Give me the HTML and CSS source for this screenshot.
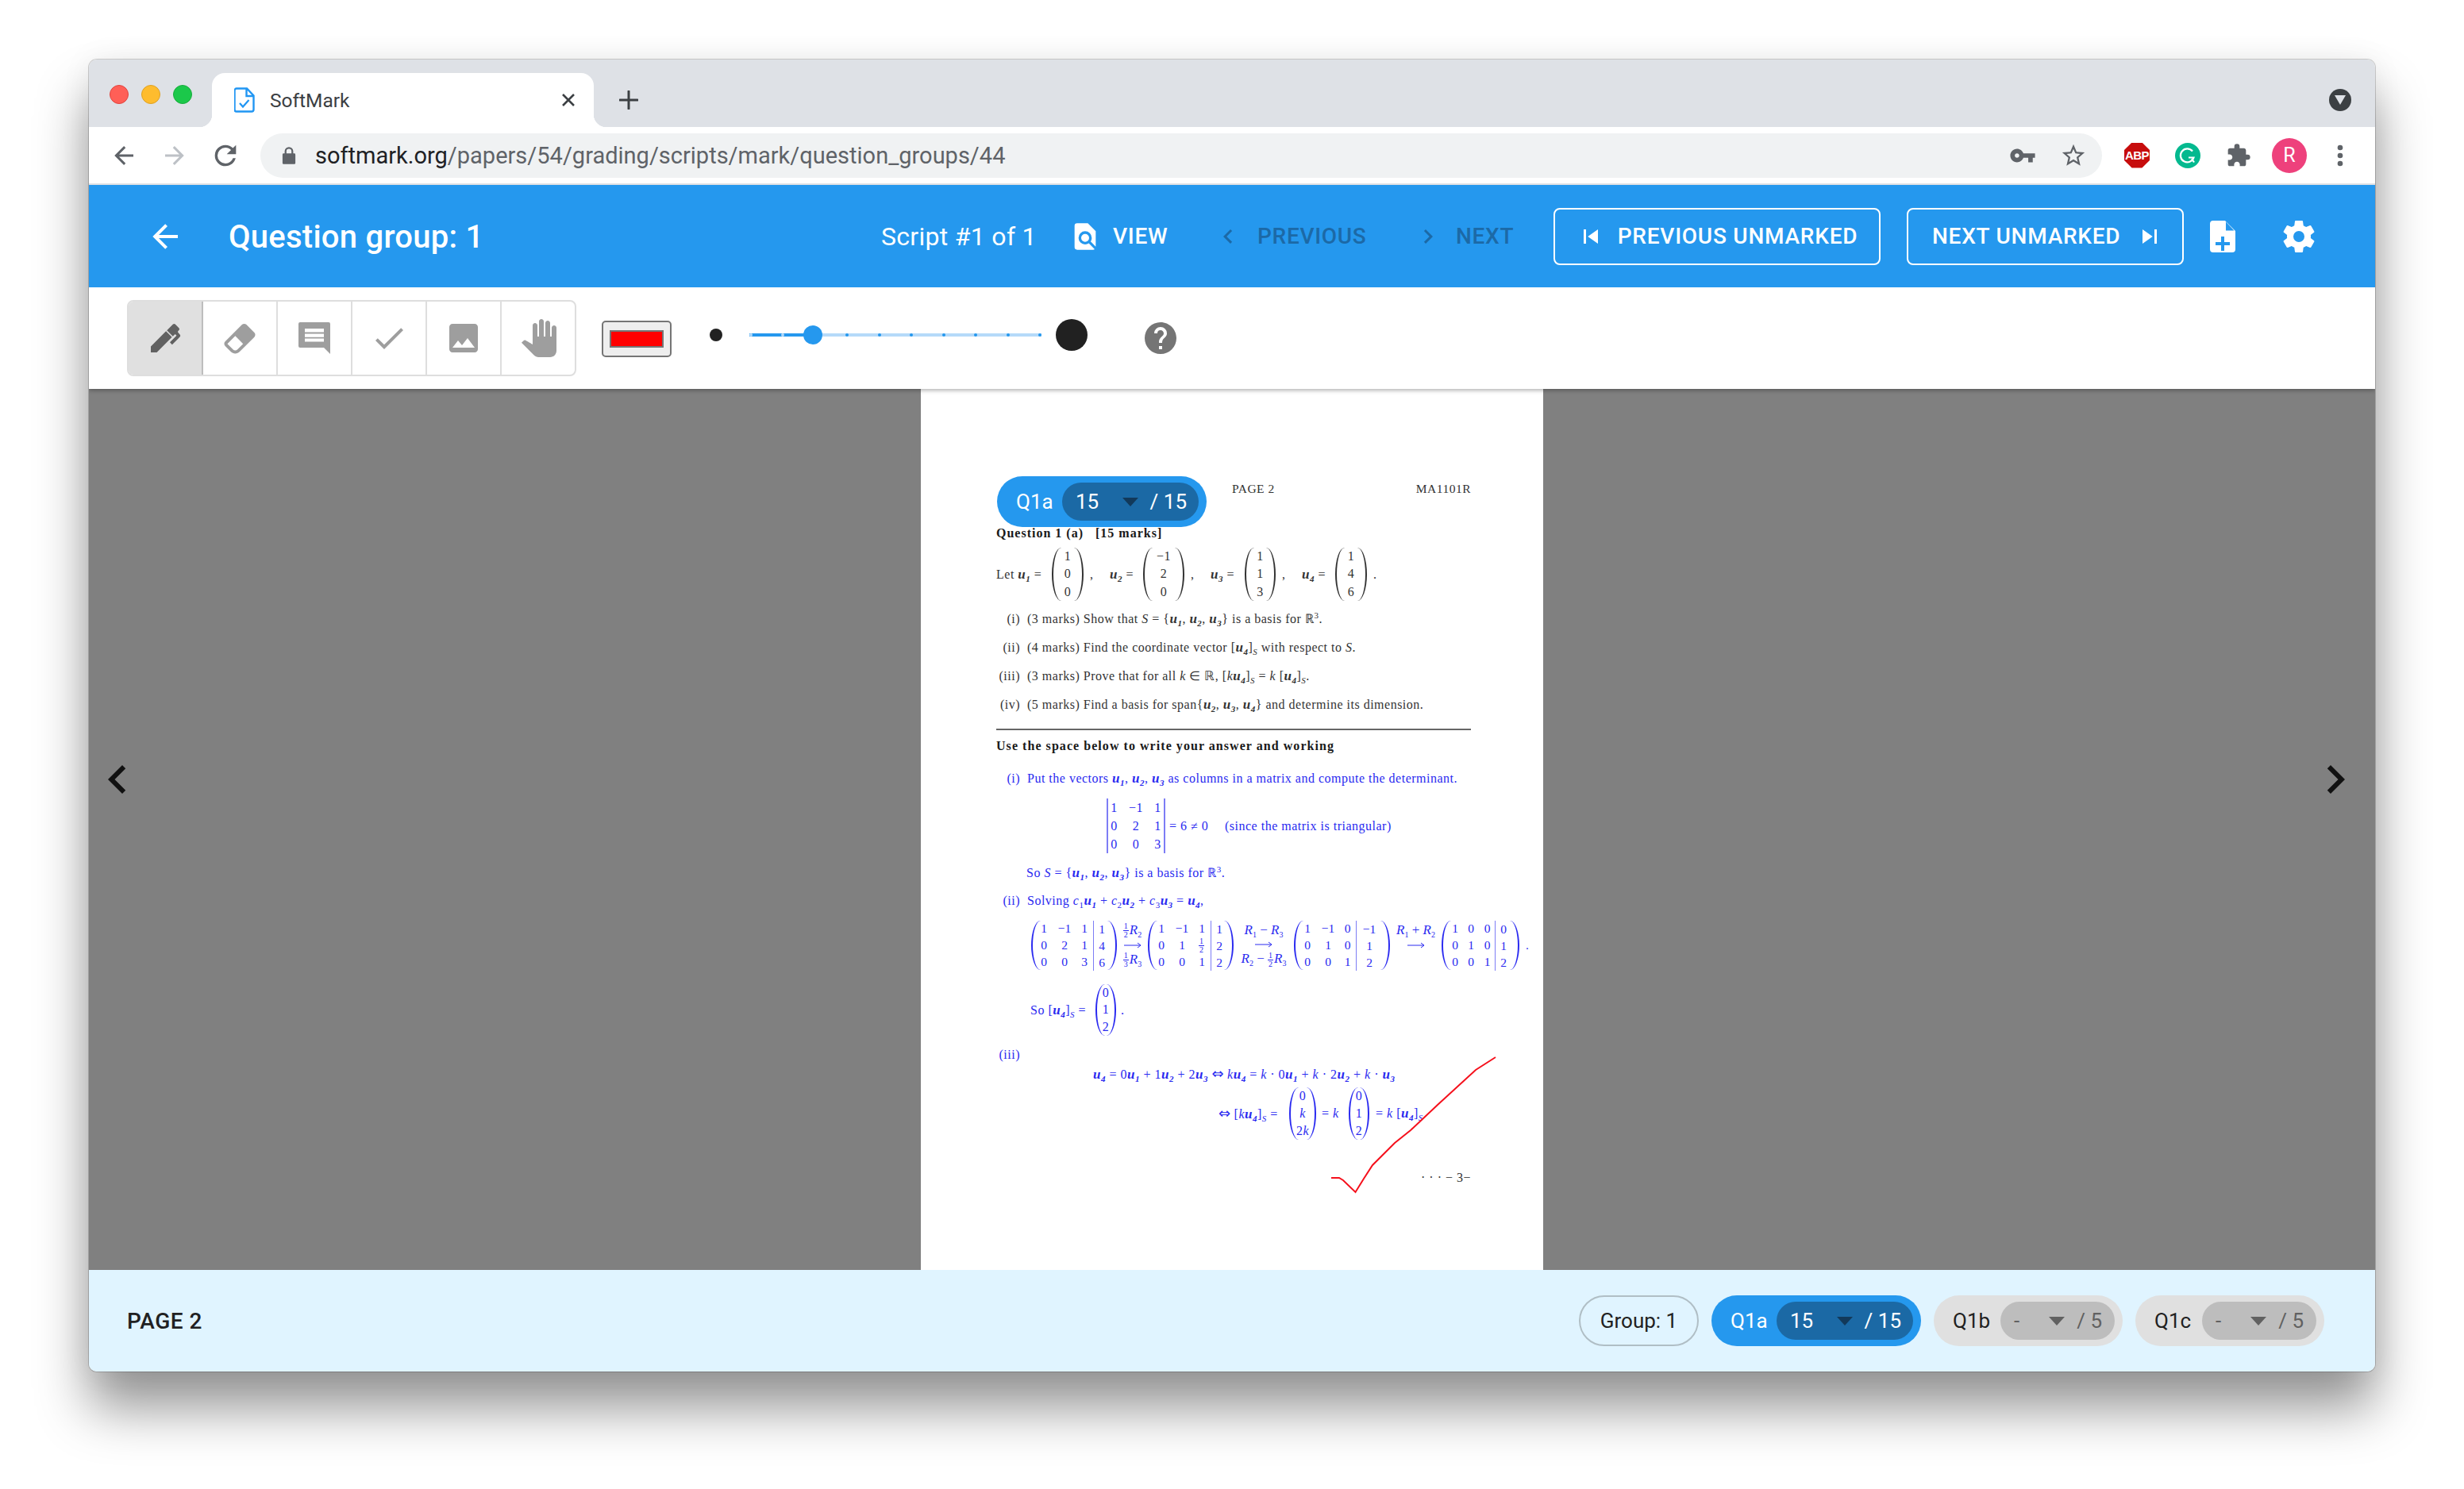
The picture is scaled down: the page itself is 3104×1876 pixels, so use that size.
FILE: index.html
```html
<!DOCTYPE html>
<html lang="en">
<head>
<meta charset="utf-8">
<title>SoftMark</title>
<link rel="stylesheet" href="styles.css">
</head>
<body>
<div class="window">
  <div class="tabstrip">
    <div class="lights"><span class="light red"></span><span class="light yellow"></span><span class="light green"></span></div>
    <div class="tab">
      <svg class="tab-icon" viewBox="0 0 26 32"><path d="M3 1.500h13l8.500 9V28a2.500 2.500 0 0 1-2.500 2.500H3A2.500 2.500 0 0 1 .5 28V4A2.500 2.500 0 0 1 3 1.500zM15.500 2v9h9" fill="none" stroke="#2196f3" stroke-width="2.400"/><path d="M7 20l4 4.500 7.500-8.500" fill="none" stroke="#2196f3" stroke-width="2.200"/></svg>
      <span class="tab-title">SoftMark</span>
      <svg class="tab-close" viewBox="0 0 18 18"><path d="M2 2l14 14M16 2L2 16" stroke="#3c4043" stroke-width="2.600"/></svg>
    </div>
    <svg class="newtab" viewBox="0 0 24 24"><path d="M12 1v22M1 12h22" stroke="#3c4043" stroke-width="3" stroke-linecap="round"/></svg>
    <div class="tabsearch"><span class="tabsearch-tri"></span></div>
  </div>
  <div class="chrome">
    <span class="slot"><svg class="ic36" viewBox="0 0 24 24"><path d="M20,11V13H8L13.500,18.500L12.080,19.920L4.160,12L12.080,4.080L13.500,5.500L8,11H20Z" fill="#5f6368"/></svg></span>
    <span class="slot"><svg class="ic36" viewBox="0 0 24 24"><path d="M4,11V13H16L10.500,18.500L11.920,19.920L19.840,12L11.920,4.080L10.500,5.500L16,11H4Z" fill="#bdc1c6"/></svg></span>
    <span class="slot"><svg class="ic40" viewBox="0 0 24 24"><path d="M17.650,6.350C16.200,4.900 14.210,4 12,4A8,8 0 0,0 4,12A8,8 0 0,0 12,20C15.730,20 18.840,17.450 19.730,14H17.650C16.830,16.330 14.610,18 12,18A6,6 0 0,1 6,12A6,6 0 0,1 12,6C13.660,6 15.140,6.690 16.220,7.780L13,11H20V4L17.650,6.350Z" fill="#5f6368"/></svg></span>
    <div class="omni">
      <svg class="lock" viewBox="0 0 20 26"><path d="M4 10V7a6 6 0 0 1 12 0v3h1.500A1.500 1.500 0 0 1 19 11.500v12a1.500 1.500 0 0 1-1.500 1.500h-15A1.500 1.500 0 0 1 1 23.500v-12A1.500 1.500 0 0 1 2.500 10zM6.500 10h7V7a3.500 3.500 0 0 0-7 0z" fill="#5f6368"/></svg>
      <span class="url"><span class="url-host">softmark.org</span>/papers/54/grading/scripts/mark/question_groups/44</span>
      <span class="slot"><svg class="ic34" viewBox="0 0 24 24"><path d="M12.650 10C11.830 7.670 9.610 6 7 6c-3.310 0-6 2.690-6 6s2.690 6 6 6c2.610 0 4.830-1.670 5.650-4H17v4h4v-4h2v-4H12.650zM7 14c-1.100 0-2-.9-2-2s.9-2 2-2 2 .9 2 2-.9 2-2 2z" fill="#5f6368"/></svg></span>
      <span class="slot"><svg class="ic34" viewBox="0 0 24 24"><path d="M22 9.240l-7.190-.62L12 2 9.190 8.630 2 9.240l5.460 4.730L5.820 21 12 17.270 18.180 21l-1.630-7.030L22 9.240zM12 15.400l-3.760 2.270 1-4.280-3.320-2.880 4.380-.38L12 6.100l1.710 4.040 4.380.38-3.320 2.880 1 4.280L12 15.400z" fill="#5f6368"/></svg></span>
    </div>
    <span class="slot slot-ext"><span class="abp">ABP</span></span>
    <span class="slot"><svg class="ic32" viewBox="0 0 32 32"><circle cx="16" cy="16" r="16" fill="#04b98f"/><path d="M22 10.500a8.500 8.500 0 1 0 1.500 8H17M21 20l3 4.500" fill="none" stroke="#fff" stroke-width="2.200"/></svg></span>
    <span class="slot"><svg class="ic32" viewBox="0 0 24 24"><path d="M20.500,11H19V7C19,5.890 18.100,5 17,5H13V3.500A2.500,2.500 0 0,0 10.500,1A2.500,2.500 0 0,0 8,3.500V5H4A2,2 0 0,0 2,7V10.800H3.500C5,10.800 6.200,12 6.200,13.500C6.200,15 5,16.200 3.500,16.200H2V20A2,2 0 0,0 4,22H7.800V20.500C7.800,19 9,17.800 10.500,17.800C12,17.800 13.200,19 13.200,20.500V22H17A2,2 0 0,0 19,20V16H20.500A2.500,2.500 0 0,0 23,13.500A2.500,2.500 0 0,0 20.500,11Z" fill="#5f6368"/></svg></span>
    <span class="slot"><span class="avatar">R</span></span>
    <span class="slot"><svg class="ic40" viewBox="0 0 24 24"><path d="M12,16A2,2 0 0,1 14,18A2,2 0 0,1 12,20A2,2 0 0,1 10,18A2,2 0 0,1 12,16M12,10A2,2 0 0,1 14,12A2,2 0 0,1 12,14A2,2 0 0,1 10,12A2,2 0 0,1 12,10M12,4A2,2 0 0,1 14,6A2,2 0 0,1 12,8A2,2 0 0,1 10,6A2,2 0 0,1 12,4Z" fill="#5f6368"/></svg></span>
  </div>
  <header class="appbar">
    <svg class="ic48 back" viewBox="0 0 24 24"><path d="M20,11V13H8L13.500,18.500L12.080,19.920L4.160,12L12.080,4.080L13.500,5.500L8,11H20Z"/></svg>
    <h1 class="title">Question group: 1</h1>
    <span class="script-count">Script #1 of 1</span>
    <span class="navbtn nav-view"><svg class="ic40" viewBox="0 0 24 24"><path d="M9,13A3,3 0 0,0 12,16A3,3 0 0,0 15,13A3,3 0 0,0 12,10A3,3 0 0,0 9,13M20,19.590V8L14,2H6A2,2 0 0,0 4,4V20A2,2 0 0,0 6,22H18C18.450,22 18.850,21.850 19.190,21.600L14.760,17.170C13.960,17.690 13,18 12,18A5,5 0 0,1 7,13A5,5 0 0,1 12,8A5,5 0 0,1 17,13C17,14 16.690,14.960 16.170,15.750L20,19.590Z"/></svg>VIEW</span>
    <span class="navbtn nav-prev off"><svg class="ic36" viewBox="0 0 24 24"><path d="M15.410,16.580L10.830,12L15.410,7.410L14,6L8,12L14,18L15.410,16.580Z"/></svg>PREVIOUS</span>
    <span class="navbtn nav-next off"><svg class="ic36" viewBox="0 0 24 24"><path d="M8.590,16.580L13.170,12L8.590,7.410L10,6L16,12L10,18L8.590,16.580Z"/></svg>NEXT</span>
    <span class="outbtn out-prev"><svg class="ic36" viewBox="0 0 24 24"><path d="M6 6h2v12H6zm3.500 6l8.500 6V6z"/></svg>PREVIOUS UNMARKED</span>
    <span class="outbtn out-next">NEXT UNMARKED<svg class="ic36" viewBox="0 0 24 24"><path d="M6 18l8.500-6L6 6v12zM16 6v12h2V6h-2z"/></svg></span>
    <svg class="ic48 addfile" viewBox="0 0 24 24"><path fill-rule="evenodd" d="M6 2a2 2 0 0 0-2 2v16a2 2 0 0 0 2 2h12a2 2 0 0 0 2-2V8.500L13.500 2zM14 2.800L19.200 8.200H14zM11 12h2v3.500h3.500v2H13V21h-2v-3.500H7.500v-2H11z"/></svg>
    <svg class="ic48" viewBox="0 0 24 24"><path d="M12,15.500A3.500,3.500 0 0,1 8.500,12A3.500,3.500 0 0,1 12,8.500A3.500,3.500 0 0,1 15.500,12A3.500,3.500 0 0,1 12,15.500M19.430,12.970C19.470,12.650 19.500,12.330 19.500,12C19.500,11.670 19.470,11.340 19.430,11L21.540,9.370C21.730,9.220 21.780,8.950 21.660,8.730L19.660,5.270C19.540,5.050 19.270,4.960 19.050,5.050L16.560,6.050C16.040,5.660 15.500,5.320 14.870,5.070L14.500,2.420C14.460,2.180 14.250,2 14,2H10C9.750,2 9.540,2.180 9.500,2.420L9.130,5.070C8.500,5.320 7.960,5.660 7.440,6.050L4.950,5.050C4.730,4.960 4.460,5.050 4.340,5.270L2.340,8.730C2.210,8.950 2.270,9.220 2.460,9.370L4.570,11C4.530,11.340 4.500,11.670 4.500,12C4.500,12.330 4.530,12.650 4.570,12.970L2.460,14.630C2.270,14.780 2.210,15.050 2.340,15.270L4.340,18.730C4.460,18.950 4.730,19.030 4.950,18.950L7.440,17.940C7.960,18.340 8.500,18.680 9.130,18.930L9.500,21.580C9.540,21.820 9.750,22 10,22H14C14.250,22 14.460,21.820 14.500,21.580L14.870,18.930C15.500,18.670 16.040,18.340 16.560,17.940L19.050,18.950C19.270,19.030 19.540,18.950 19.660,18.730L21.660,15.270C21.780,15.050 21.730,14.780 21.540,14.630L19.430,12.970Z"/></svg>
  </header>
  <div class="tools">
    <div class="toolgroup">
      <span class="tool active"><svg class="ic48" viewBox="0 0 24 24"><path d="M20.710,7.040C20.370,7.380 20.040,7.710 20.030,8.040C20,8.360 20.340,8.690 20.660,9C21.140,9.500 21.610,9.950 21.590,10.440C21.570,10.930 21.060,11.440 20.550,11.940L16.420,16.080L15,14.660L19.250,10.420L18.290,9.460L16.870,10.870L13.120,7.120L16.960,3.290C17.350,2.900 18,2.900 18.370,3.290L20.710,5.630C21.100,6 21.100,6.650 20.710,7.040M3,17.250L12.560,7.680L16.310,11.430L6.750,21H3V17.250Z"/></svg></span>
      <span class="tool"><svg class="ic48" viewBox="0 0 24 24"><path d="M16.240,3.560L21.190,8.500C21.970,9.290 21.970,10.550 21.190,11.340L12,20.530C10.440,22.090 7.910,22.090 6.340,20.530L2.810,17C2.030,16.210 2.030,14.950 2.810,14.160L13.410,3.560C14.200,2.780 15.460,2.780 16.240,3.560M4.220,15.580L7.760,19.110C8.540,19.900 9.800,19.900 10.590,19.110L14.120,15.580L9.170,10.630L4.220,15.580Z"/></svg></span>
      <span class="tool"><svg class="ic48" viewBox="0 0 24 24"><path fill-rule="evenodd" d="M3 2h18a1 1 0 0 1 1 1v19l-4-4H3a1 1 0 0 1-1-1V3a1 1 0 0 1 1-1zM6 6v2.300h12V6zM6 9.200v2.200h12V9.200zM6 12.200v2.100h12v-2.100z"/></svg></span>
      <span class="tool"><svg class="ic48" viewBox="0 0 24 24"><path d="M21,7L9,19L3.500,13.500L4.910,12.090L9,16.170L19.590,5.590L21,7Z"/></svg></span>
      <span class="tool"><svg class="ic48" viewBox="0 0 24 24"><path d="M21 19V5c0-1.100-.9-2-2-2H5c-1.100 0-2 .9-2 2v14c0 1.100.9 2 2 2h14c1.100 0 2-.9 2-2zM8.500 13.500l2.500 3.010L14.500 12l4.500 6H5l3.500-4.500z"/></svg></span>
      <span class="tool"><svg class="ic48" viewBox="0 0 24 24"><path d="M23 5.500V20c0 2.200-1.800 4-4 4h-7.300c-1.080 0-2.100-.43-2.850-1.190L1 14.830s1.260-1.230 1.300-1.250c.22-.19.49-.29.79-.29.22 0 .42.06.6.16.04.01 4.310 2.460 4.310 2.460V4c0-.83.67-1.500 1.500-1.500S11 3.170 11 4v7h1V1.500c0-.83.67-1.500 1.500-1.500S15 .67 15 1.500V11h1V2.500c0-.83.67-1.500 1.500-1.500s1.500.67 1.500 1.500V11h1V5.500c0-.83.67-1.500 1.500-1.500s1.500.67 1.500 1.500z"/></svg></span>
    </div>
    <span class="swatch"><span class="swatch-red"></span></span>
    <span class="dot-small"></span>
    <div class="slider">
      <div class="slider-fill"></div>
      <div class="ticks"><i class="tick on"></i><i class="tick on"></i><i class="tick"></i><i class="tick"></i><i class="tick"></i><i class="tick"></i><i class="tick"></i><i class="tick"></i><i class="tick"></i><i class="tick"></i></div>
      <span class="thumb"></span>
    </div>
    <span class="dot-big"></span>
    <svg class="ic48 help" viewBox="0 0 24 24"><path d="M15.070,11.250L14.170,12.170C13.450,12.890 13,13.500 13,15H11V14.500C11,13.390 11.450,12.390 12.170,11.670L13.410,10.410C13.780,10.050 14,9.550 14,9C14,7.890 13.100,7 12,7A2,2 0 0,0 10,9H8A4,4 0 0,1 12,5A4,4 0 0,1 16,9C16,9.880 15.640,10.670 15.070,11.250M13,19H11V17H13M12,2A10,10 0 0,0 2,12A10,10 0 0,0 12,22A10,10 0 0,0 22,12C22,6.470 17.500,2 12,2Z"/></svg>
  </div>
  <main class="viewer">
    <svg class="pager pager-l" viewBox="0 0 24 24"><path d="M15.410,16.580L10.830,12L15.410,7.410L14,6L8,12L14,18L15.410,16.580Z"/></svg>
    <article class="paper">
      <div class="chip chip-blue chip-float"><span class="chip-label">Q1a</span><span class="chip-in wide"><span class="val">15</span><i class="tri"></i><span>/ 15</span></span></div>
      <div class="row r-head"><span class="pg">PAGE 2</span><span class="mod">MA1101R</span></div>
      <div class="row r-q"><b class="qhead">Question 1 (a) &nbsp; [15 marks]</b></div>
      <div class="row r-let">
        <span class="w70">Let <b class="v">u<sub>1</sub></b> =</span>
        <span class="pm w40"><span>1</span><span>0</span><span>0</span></span>
        <span class="comma">,</span>
        <span class="w42"><b class="v">u<sub>2</sub></b> =</span>
        <span class="pm w52"><span>&minus;1</span><span>2</span><span>0</span></span>
        <span class="comma">,</span>
        <span class="w43"><b class="v">u<sub>3</sub></b> =</span>
        <span class="pm w39"><span>1</span><span>1</span><span>3</span></span>
        <span class="comma">,</span>
        <span class="w42"><b class="v">u<sub>4</sub></b> =</span>
        <span class="pm w40"><span>1</span><span>4</span><span>6</span></span>
        <span class="comma">.</span>
      </div>
      <div class="row r-i"><span class="lbl">(i)</span><span>(3 marks) Show that <em>S</em> = {<b class="v">u<sub>1</sub></b>, <b class="v">u<sub>2</sub></b>, <b class="v">u<sub>3</sub></b>} is a basis for ℝ<sup>3</sup>.</span></div>
      <div class="row r-n"><span class="lbl">(ii)</span><span>(4 marks) Find the coordinate vector [<b class="v">u<sub>4</sub></b>]<sub><em>S</em></sub> with respect to <em>S</em>.</span></div>
      <div class="row r-n"><span class="lbl">(iii)</span><span>(3 marks) Prove that for all <em>k</em> ∈ ℝ, [<em>k</em><b class="v">u<sub>4</sub></b>]<sub><em>S</em></sub> = <em>k</em> [<b class="v">u<sub>4</sub></b>]<sub><em>S</em></sub>.</span></div>
      <div class="row r-n"><span class="lbl">(iv)</span><span>(5 marks) Find a basis for span{<b class="v">u<sub>2</sub></b>, <b class="v">u<sub>3</sub></b>, <b class="v">u<sub>4</sub></b>} and determine its dimension.</span></div>
      <hr class="rule">
      <div class="row r-use"><b class="usehead">Use the space below to write your answer and working</b></div>
      <div class="answer">
        <div class="row r-a1"><span class="lbl">(i)</span><span>Put the vectors <b class="v">u<sub>1</sub></b>, <b class="v">u<sub>2</sub></b>, <b class="v">u<sub>3</sub></b> as columns in a matrix and compute the determinant.</span></div>
        <div class="row r-det">
          <span class="det"><span>1</span><span>&minus;1</span><span>1</span><span>0</span><span>2</span><span>1</span><span>0</span><span>0</span><span>3</span></span>
          <span class="det-eq">= 6 ≠ 0</span>
          <span class="det-note">(since the matrix is triangular)</span>
        </div>
        <div class="row r-so"><span>So <em>S</em> = {<b class="v">u<sub>1</sub></b>, <b class="v">u<sub>2</sub></b>, <b class="v">u<sub>3</sub></b>} is a basis for ℝ<sup>3</sup>.</span></div>
        <div class="row r-a2"><span class="lbl">(ii)</span><span>Solving <em>c</em><sub>1</sub><b class="v">u<sub>1</sub></b> + <em>c</em><sub>2</sub><b class="v">u<sub>2</sub></b> + <em>c</em><sub>3</sub><b class="v">u<sub>3</sub></b> = <b class="v">u<sub>4</sub></b>,</span></div>
        <div class="row r-big">
          <span class="pm4 m-a"><span>1</span><span>&minus;1</span><span>1</span><span class="aug">1</span><span>0</span><span>2</span><span>1</span><span class="aug">4</span><span>0</span><span>0</span><span>3</span><span class="aug">6</span></span>
          <span class="op w39"><span><span class="frac"><span>1</span><span>2</span></span><em>R</em><sub>2</sub></span><svg class="arrow" viewBox="0 0 22 8"><path d="M0 4h21M17 1l4 3-4 3" fill="none" stroke="currentColor"/></svg><span><span class="frac"><span>1</span><span>3</span></span><em>R</em><sub>3</sub></span></span>
          <span class="pm4 m-a m-b"><span>1</span><span>&minus;1</span><span>1</span><span class="aug">1</span><span>0</span><span>1</span><span class="frac"><span>1</span><span>2</span></span><span class="aug">2</span><span>0</span><span>0</span><span>1</span><span class="aug">2</span></span>
          <span class="op w76"><span><em>R</em><sub>1</sub> &minus; <em>R</em><sub>3</sub></span><svg class="arrow" viewBox="0 0 22 8"><path d="M0 4h21M17 1l4 3-4 3" fill="none" stroke="currentColor"/></svg><span><em>R</em><sub>2</sub> &minus; <span class="frac"><span>1</span><span>2</span></span><em>R</em><sub>3</sub></span></span>
          <span class="pm4 m-c"><span>1</span><span>&minus;1</span><span>0</span><span class="aug">&minus;1</span><span>0</span><span>1</span><span>0</span><span class="aug">1</span><span>0</span><span>0</span><span>1</span><span class="aug">2</span></span>
          <span class="op w65"><span><em>R</em><sub>1</sub> + <em>R</em><sub>2</sub></span><svg class="arrow" viewBox="0 0 22 8"><path d="M0 4h21M17 1l4 3-4 3" fill="none" stroke="currentColor"/></svg><span>&nbsp;</span></span>
          <span class="pm4 m-d"><span>1</span><span>0</span><span>0</span><span class="aug">0</span><span>0</span><span>1</span><span>0</span><span class="aug">1</span><span>0</span><span>0</span><span>1</span><span class="aug">2</span></span>
          <span class="comma">.</span>
        </div>
        <div class="row r-u4">
          <span class="w82">So [<b class="v">u<sub>4</sub></b>]<sub><em>S</em></sub> =</span>
          <span class="pm w26"><span>0</span><span>1</span><span>2</span></span>
          <span class="period">.</span>
        </div>
        <div class="row r-a3"><span class="lbl">(iii)</span></div>
        <div class="row r-eq1"><span><b class="v">u<sub>4</sub></b> = 0<b class="v">u<sub>1</sub></b> + 1<b class="v">u<sub>2</sub></b> + 2<b class="v">u<sub>3</sub></b> <span class="iff">⇔</span> <em>k</em><b class="v">u<sub>4</sub></b> = <em>k</em> · 0<b class="v">u<sub>1</sub></b> + <em>k</em> · 2<b class="v">u<sub>2</sub></b> + <em>k</em> · <b class="v">u<sub>3</sub></b></span></div>
        <div class="row r-eq2">
          <span class="w89"><span class="iff">⇔</span> [<em>k</em><b class="v">u<sub>4</sub></b>]<sub><em>S</em></sub> =</span>
          <span class="pm w34"><span>0</span><em>k</em><span>2<em>k</em></span></span>
          <span class="eqk">= <em>k</em></span>
          <span class="pm w26"><span>0</span><span>1</span><span>2</span></span>
          <span class="eqk2">= <em>k</em> [<b class="v">u<sub>4</sub></b>]<sub><em>S</em></sub></span>
        </div>
      </div>
      <div class="row r-end"><span>· · · &minus; 3&minus;</span></div>
      <svg class="tick-mark" viewBox="0 0 784 1110"><polyline points="517,994 527,994 532,997 547.500,1012 558,995 569,978 597,950 617,934 651,902 699,858 724,842" fill="none" stroke="#f5101c" stroke-width="2"/></svg>
    </article>
    <svg class="pager pager-r" viewBox="0 0 24 24"><path d="M8.590,16.580L13.170,12L8.590,7.410L10,6L16,12L10,18L8.590,16.580Z"/></svg>
  </main>
  <footer class="bottombar">
    <span class="page-label">PAGE 2</span>
    <div class="chips">
      <span class="chip chip-line">Group: 1</span>
      <div class="chip chip-blue"><span class="chip-label">Q1a</span><span class="chip-in wide"><span class="val">15</span><i class="tri"></i><span>/ 15</span></span></div>
      <div class="chip chip-gray"><span class="chip-label">Q1b</span><span class="chip-in"><span class="val">-</span><i class="tri"></i><span>/ 5</span></span></div>
      <div class="chip chip-gray"><span class="chip-label">Q1c</span><span class="chip-in"><span class="val">-</span><i class="tri"></i><span>/ 5</span></span></div>
    </div>
  </footer>
</div>
</body>
</html>
```

FILE: styles.css
```css
* { box-sizing: border-box; }
html, body { margin: 0; background: #fff; }
body { width: 3104px; height: 1876px; padding: 75px 112px 0; overflow: hidden; font-family: Roboto, "Liberation Sans", sans-serif; }
svg { display: block; flex: none; }

body::before { content: ""; position: absolute; left: 112px; top: 75px; width: 2880px; height: 1653px; border-radius: 10px; box-shadow: 0 0 0 1px rgba(0,0,0,.18), 0 46px 66px rgba(0,0,0,.42), 0 0 40px rgba(0,0,0,.06); }
.window { width: 2880px; height: 1653px; display: flex; flex-direction: column; border-radius: 10px; overflow: hidden; position: relative; }

.tabstrip { height: 85px; flex: none; background: #dee1e6; display: flex; align-items: flex-end; }
.lights { display: flex; gap: 16px; align-self: flex-start; margin: 32px 0 0 26px; }
.light { width: 24px; height: 24px; border-radius: 50%; }
.red { background: #ff5f57; border: 1px solid #e0443e; }
.yellow { background: #febc2e; border: 1px solid #dea123; }
.green { background: #1bc84a; border: 1px solid #18ac3c; }
.tab { width: 481px; height: 68px; margin-left: 25px; background: #fff; border-radius: 16px 16px 0 0; display: flex; align-items: center; padding: 0 24px 0 28px; position: relative; }
.tab::before, .tab::after { content: ""; position: absolute; bottom: 0; width: 16px; height: 16px; }
.tab::before { left: -16px; background: radial-gradient(circle at 0 0, transparent 16px, #fff 16.5px); }
.tab::after { right: -16px; background: radial-gradient(circle at 100% 0, transparent 16px, #fff 16.5px); }
.tab-icon { width: 26px; height: 32px; }
.tab-title { font-size: 24.500px; color: #3c4043; margin-left: 19px; flex: 1; }
.tab-close { width: 18px; height: 18px; margin-right: -1px; }
.newtab { width: 24px; height: 24px; margin: 0 0 22px 32px; }
.tabsearch { width: 28px; height: 28px; border-radius: 50%; background: #3c4043; margin: 37px 30px 0 auto; align-self: flex-start; display: flex; align-items: center; justify-content: center; }
.tabsearch-tri { width: 0; height: 0; border: 7px solid transparent; border-top: 12px solid #dee1e6; border-bottom: 0; }

.chrome { height: 73px; flex: none; background: #fff; border-bottom: 2px solid #dfe1e5; display: flex; align-items: center; padding: 0 12px; }
.slot { width: 64px; height: 56px; flex: none; display: flex; align-items: center; justify-content: center; }
.ic32 { width: 32px; height: 32px; }
.ic34 { width: 34px; height: 34px; }
.ic36 { width: 36px; height: 36px; fill: currentColor; }
.ic40 { width: 40px; height: 40px; fill: currentColor; }
.ic48 { width: 48px; height: 48px; fill: currentColor; }
.omni { flex: 1; height: 56px; margin-left: 12px; background: #f0f2f3; border-radius: 28px; display: flex; align-items: center; padding: 0 4px 0 27px; }
.lock { width: 18px; height: 24px; }
.url { font-size: 29px; color: #5f6368; margin-left: 24px; flex: 1; }
.url-host { color: #202124; }
.slot-ext { margin-left: 12px; }
.abp { width: 32px; height: 32px; background: #c70d0d; clip-path: polygon(30% 0, 70% 0, 100% 30%, 100% 70%, 70% 100%, 30% 100%, 0 70%, 0 30%); color: #fff; font: 700 15px/32px "Liberation Sans Narrow", "Liberation Sans", sans-serif; text-align: center; letter-spacing: -.5px; }
.avatar { width: 44px; height: 44px; border-radius: 50%; background: #ee417c; color: #fff; font-size: 25px; line-height: 44px; text-align: center; }

.appbar { height: 129px; flex: none; background: #2598ee; color: #fff; display: flex; align-items: center; padding-left: 72px; position: relative; z-index: 2; }
.title { font-size: 40px; font-weight: 500; margin: 0 0 0 56px; padding-top: 2px; line-height: 48px; width: 822px; flex: none; letter-spacing: .25px; }
.script-count { font-size: 32px; width: 232px; flex: none; letter-spacing: .3px; padding-top: 1px; }
.navbtn { display: flex; align-items: center; font-size: 28px; font-weight: 500; letter-spacing: .7px; flex: none; }
.nav-view { width: 183px; margin-left: 5px; }
.nav-view svg { margin-right: 15px; }
.nav-prev { width: 252px; margin-left: -1px; }
.nav-prev svg { margin-right: 19px; }
.nav-next { width: 158px; }
.nav-next svg { margin-right: 17px; }
.off { color: #1c69a6; }
.outbtn { height: 72px; flex: none; display: flex; align-items: center; border: 2px solid #fff; border-radius: 8px; font-size: 28px; font-weight: 500; letter-spacing: .75px; }
.out-prev { width: 412px; margin-left: 18px; justify-content: center; }
.out-prev svg { margin-right: 16px; }
.out-next { width: 349px; margin-left: 33px; padding-left: 30px; }
.out-next svg { margin-left: 19px; }
.addfile { margin: 0 48px 0 25px; }

.tools { height: 128px; flex: none; background: #fff; display: flex; align-items: center; padding-left: 48px; position: relative; z-index: 1; box-shadow: 0 2px 5px rgba(0,0,0,.3); }
.toolgroup { width: 566px; height: 96px; display: flex; border: 2px solid #dedede; border-radius: 8px; overflow: hidden; }
.tool { width: 94px; flex: none; display: flex; align-items: center; justify-content: center; color: #9e9e9e; border-right: 2px solid #dedede; }
.tool:last-child { border-right: 0; }
.tool.active { background: #e0e0e0; color: #616161; border-right-color: #bdbdbd; }
.swatch { width: 88px; height: 46px; margin: 0 0 0 32px; background: #eee; border: 2px solid #757575; border-radius: 5px; padding: 10px 8px; flex: none; transform: translateY(1px); }
.swatch-red { display: block; height: 100%; background: #f00; border: 2px solid #757575; }
.dot-small { width: 16px; height: 16px; border-radius: 50%; background: #212121; margin: 0 34px 0 48px; flex: none; transform: translateY(-4px); }
.slider { width: 368px; height: 4px; background: #b5daf9; position: relative; flex: none; transform: translateY(-4px); }
.slider-fill { position: absolute; left: 0; top: 0; width: 80px; height: 4px; background: #2598ee; }
.ticks { position: absolute; inset: 0; display: flex; justify-content: space-between; }
.tick { width: 4px; height: 4px; background: #2598ee; border-radius: 50%; }
.tick.on { background: #b5daf9; }
.thumb { position: absolute; left: 68px; top: -10px; width: 24px; height: 24px; border-radius: 50%; background: #2598ee; }
.dot-big { width: 40px; height: 40px; border-radius: 50%; background: #212121; margin-left: 18px; flex: none; transform: translateY(-4px); }
.help { color: #757575; margin-left: 68px; }

.viewer { flex: 1; min-height: 0; background: #808080; display: flex; overflow: hidden; }
.pager { width: 72px; height: 72px; flex: none; margin-top: 456px; fill: #111; }
.pager-l { margin-right: 976px; }
.pager-r { margin-left: 962px; }
.paper { width: 784px; height: 1110px; flex: none; background: #fff; padding: 116px 91px 0 95px; position: relative; font: 16px/20px "Liberation Serif", serif; color: #333; letter-spacing: .5px; }
.paper sub, .paper sup { font-size: 11px; line-height: 0; }
.v { font-style: italic; font-weight: 700; font-size: 17px; }
.iff { font: 18px/20px "DejaVu Sans", sans-serif; letter-spacing: 0; }
.row { display: flex; align-items: center; flex: none; height: 20px; white-space: nowrap; }
.r-head { justify-content: space-between; padding-left: 297px; font-size: 15.500px; }
.r-q { margin-top: 36px; }
.qhead, .usehead { color: #1a1a1a; font-weight: 700; letter-spacing: 1.05px; }
.qhead { letter-spacing: 1px; }
.r-let { margin-top: 8px; height: 67px; }
.r-i { margin-top: 13px; }
.r-n { margin-top: 16px; }
.rule { height: 2px; border: 0; background: #666; margin: 20px 0 0; }
.r-use { margin-top: 10px; }
.lbl { width: 30px; text-align: right; margin-right: 9px; flex: none; }
.pm { display: flex; flex-direction: column; align-items: center; justify-content: space-around; height: 100%; position: relative; flex: none; font-style: normal; }
.pm::before, .pm::after, .pm4::before, .pm4::after { content: ""; position: absolute; top: 0; bottom: 0; width: 10px; border: 0 solid currentColor; }
.pm::before, .pm4::before { left: 0; border-left-width: 2px; border-radius: 100% 0 0 100% / 50% 0 0 50%; }
.pm::after, .pm4::after { right: 0; border-right-width: 2px; border-radius: 0 100% 100% 0 / 0 50% 50% 0; }
.w26 { width: 26px; } .w34 { width: 34px; } .w39 { width: 39px; } .w40 { width: 40px; } .w42 { width: 42px; } .w43 { width: 43px; } .w52 { width: 52px; } .w65 { width: 65px; } .w70 { width: 70px; } .w76 { width: 76px; } .w82 { width: 82px; } .w89 { width: 89px; }
.comma { width: 33px; padding-left: 8px; flex: none; }
.answer { color: #2a2af0; }
.r-a1 { margin-top: 21px; }
.r-det { margin-top: 15px; height: 69px; padding-left: 139px; }
.det { display: grid; grid-template-columns: 15px 40px 15px; align-content: space-around; justify-items: center; width: 74px; height: 100%; border-left: 2px solid #7d7df5; border-right: 2px solid #7d7df5; flex: none; }
.det-eq { margin-left: 5px; width: 70px; flex: none; }
.r-so { margin-top: 15px; padding-left: 38px; }
.r-a2 { margin-top: 15px; }
.r-big { margin-top: 15px; height: 62px; padding-left: 44px; font-size: 15.500px; letter-spacing: 0; }
.pm4 { display: grid; align-content: space-around; justify-items: center; height: 100%; position: relative; flex: none; }
.aug { justify-self: stretch; text-align: center; box-shadow: -1px 0 0 #7d7df5; height: 21px; line-height: 21px; }
.m-a { width: 108px; padding: 0 9px 0 3px; grid-template-columns: 26px 26px 24px 20px; }
.m-b { padding: 0 8px 0 4px; }
.m-c { width: 121px; padding: 0 10px 0 4px; grid-template-columns: 26px 26px 23px 32px; }
.m-d { width: 98px; padding: 0 10px 0 7px; grid-template-columns: 20px 20px 21px 20px; }
.frac { display: inline-flex; flex-direction: column; align-items: center; vertical-align: middle; font-size: 10px; line-height: 10px; margin-right: 1px; }
.frac span:first-child { border-bottom: 1px solid currentColor; padding: 0 1px; }
.op { height: 100%; flex: none; display: flex; flex-direction: column; align-items: center; justify-content: space-around; font-size: 17px; }
.op sub { font-size: 10px; }
.arrow { width: 22px; height: 8px; }
.r-u4 { margin-top: 18px; height: 65px; padding-left: 43px; }
.period { padding-left: 6px; }
.r-a3 { margin-top: 14px; }
.r-eq1 { margin-top: 4px; padding-left: 122px; }
.r-eq2 { margin-top: 7px; height: 66px; padding-left: 280px; }
.eqk { width: 41px; padding-left: 7px; flex: none; }
.eqk2 { padding-left: 8px; }
.r-end { margin-top: 38px; justify-content: flex-end; }
.tick-mark { position: absolute; inset: 0; width: 784px; height: 1110px; }

.bottombar { height: 128px; flex: none; background: #e0f4ff; display: flex; align-items: center; padding: 0 64px 0 48px; position: relative; z-index: 1; }
.page-label { font-size: 28px; font-weight: 500; color: #212121; letter-spacing: .5px; }
.chips { margin-left: auto; display: flex; gap: 16px; }
.chip { height: 64px; border-radius: 32px; display: inline-flex; align-items: center; font: 400 26px/30px Roboto, "Liberation Sans", sans-serif; letter-spacing: 0; padding: 0 10px 0 24px; flex: none; }
.chip-line { width: 151px; padding: 0; justify-content: center; border: 2px solid #b0bec5; color: #212121; }
.chip-blue { width: 264px; background: #2598ee; color: #fff; }
.chip-gray { width: 238px; background: #e0e0e0; color: #212121; }
.chip-float { position: absolute; left: 96px; top: 110px; z-index: 1; }
.chip-label { flex: 1; }
.chip-in { width: 144px; height: 48px; border-radius: 24px; background: #bdbdbd; color: #616161; display: flex; align-items: center; padding: 0 16px 0 17px; flex: none; }
.chip-in.wide { width: 172px; background: #1b69a5; color: #fff; padding-right: 15px; }
.val { flex: 1; }
.tri { width: 0; height: 0; border: 10px solid transparent; border-top: 11px solid #616161; border-bottom: 0; margin-right: 15px; }
.wide .tri { border-top-color: #12395a; }
```
